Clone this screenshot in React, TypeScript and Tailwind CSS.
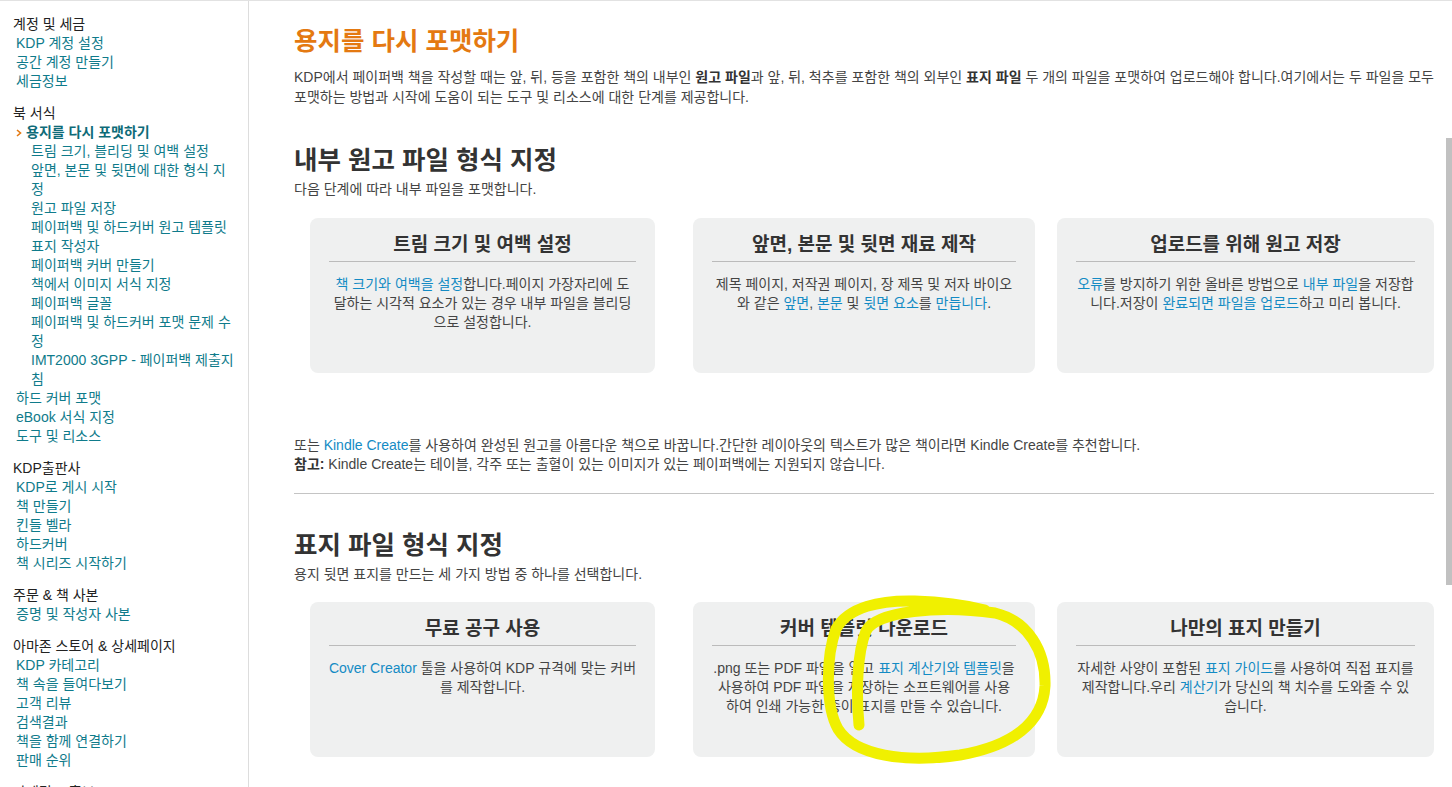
import React from "react"

type Item = { t: string; sub?: boolean; active?: boolean }
type Group = { title: string; items: Item[] }

const groups: Group[] = [
  {
    title: "계정 및 세금",
    items: [{ t: "KDP 계정 설정" }, { t: "공간 계정 만들기" }, { t: "세금정보" }],
  },
  {
    title: "북 서식",
    items: [
      { t: "용지를 다시 포맷하기", active: true },
      { t: "트림 크기, 블리딩 및 여백 설정", sub: true },
      { t: "앞면, 본문 및 뒷면에 대한 형식 지\n정", sub: true },
      { t: "원고 파일 저장", sub: true },
      { t: "페이퍼백 및 하드커버 원고 템플릿", sub: true },
      { t: "표지 작성자", sub: true },
      { t: "페이퍼백 커버 만들기", sub: true },
      { t: "책에서 이미지 서식 지정", sub: true },
      { t: "페이퍼백 글꼴", sub: true },
      { t: "페이퍼백 및 하드커버 포맷 문제 수\n정", sub: true },
      { t: "IMT2000 3GPP - 페이퍼백 제출지\n침", sub: true },
      { t: "하드 커버 포맷" },
      { t: "eBook 서식 지정" },
      { t: "도구 및 리소스" },
    ],
  },
  {
    title: "KDP출판사",
    items: [
      { t: "KDP로 게시 시작" },
      { t: "책 만들기" },
      { t: "킨들 벨라" },
      { t: "하드커버" },
      { t: "책 시리즈 시작하기" },
    ],
  },
  {
    title: "주문 & 책 사본",
    items: [{ t: "증명 및 작성자 사본" }],
  },
  {
    title: "아마존 스토어 & 상세페이지",
    items: [
      { t: "KDP 카테고리" },
      { t: "책 속을 들여다보기" },
      { t: "고객 리뷰" },
      { t: "검색결과" },
      { t: "책을 함께 연결하기" },
      { t: "판매 순위" },
    ],
  },
  {
    title: "마케팅 & 홍보",
    items: [],
  },
]

const A = ({ children }: { children: React.ReactNode }) => (
  <span className="text-[#148bc4]">{children}</span>
)

function Sidebar() {
  return (
    <aside className="w-[249px] shrink-0 border-r border-[#dddddd] pl-[13px] pr-[4px] pt-[14px] text-[14px] leading-[19px]">
      {groups.map((g) => (
        <div key={g.title} className="mb-[13px]">
          <div className="text-[#222]">{g.title}</div>
          {g.items.map((it) =>
            it.active ? (
              <div key={it.t} className="flex items-center pl-[3px] font-bold text-[#0e6b78]">
                <svg width="10" height="8" viewBox="0 0 10 8" className="shrink-0">
                  <polyline points="1,1 4.5,4 1,7" fill="none" stroke="#e47911" strokeWidth="1.6" />
                </svg>
                <span>{it.t}</span>
              </div>
            ) : (
              <div
                key={it.t}
                className={
                  it.sub
                    ? "whitespace-pre-line pl-[18px] text-[#0f7b8b]"
                    : "whitespace-pre-line pl-[3px] text-[#0f7b8b]"
                }
              >
                {it.t}
              </div>
            )
          )}
        </div>
      ))}
    </aside>
  )
}

function Card({ title, w, children }: { title: string; w: string; children: React.ReactNode }) {
  return (
    <div className={`h-[155px] shrink-0 rounded-[8px] bg-[#eff0f0] ${w}`}>
      <div className="mx-[19px] border-b border-[#bbbbbb] pt-[13px] pb-[3px] text-center text-[19px] font-bold leading-[27px] text-[#333]">
        {title}
      </div>
      <p className="mt-[13px] whitespace-nowrap px-[8px] text-center leading-[19px]">{children}</p>
    </div>
  )
}

export default function App() {
  return (
    <div className="relative flex h-[787px] overflow-hidden border-t border-[#e2e2e2] bg-white font-['Liberation_Sans','Noto_Sans_CJK_KR',sans-serif]">
      <Sidebar />

      <main className="flex-1 pl-[45px] pt-[24px] text-[14px] text-[#444]">
        <h1 className="text-[25.5px] font-bold leading-[32px] text-[#e47911]">용지를 다시 포맷하기</h1>
        <p className="mt-[10px] w-[1140px] leading-[20px]">
          <span className="block whitespace-nowrap">
            KDP에서 페이퍼백 책을 작성할 때는 앞, 뒤, 등을 포함한 책의 내부인 <b className="text-[#333]">원고 파일</b>과 앞, 뒤, 척추를 포함한 책의 외부인{" "}
            <b className="text-[#333]">표지 파일</b> 두 개의 파일을 포맷하여 업로드해야 합니다.여기에서는 두 파일을 모두
          </span>
          <span className="block whitespace-nowrap">포맷하는 방법과 시작에 도움이 되는 도구 및 리소스에 대한 단계를 제공합니다.</span>
        </p>

        <h2 className="mt-[37px] text-[25.5px] font-bold leading-[32px] text-[#333]">내부 원고 파일 형식 지정</h2>
        <p className="mt-[3px] leading-[20px]">다음 단계에 따라 내부 파일을 포맷합니다.</p>

        <div className="mt-[19px] ml-[16px] flex">
          <Card title="트림 크기 및 여백 설정" w="w-[345px]">
            <A>책 크기와 여백을 설정</A>합니다.페이지 가장자리에 도
            <br />
            달하는 시각적 요소가 있는 경우 내부 파일을 블리딩
            <br />
            으로 설정합니다.
          </Card>
          <div className="w-[38px] shrink-0" />
          <Card title="앞면, 본문 및 뒷면 재료 제작" w="w-[342px]">
            제목 페이지, 저작권 페이지, 장 제목 및 저자 바이오
            <br />와 같은 <A>앞면</A>, <A>본문</A> 및 <A>뒷면 요소</A>를 <A>만듭니다</A>.
          </Card>
          <div className="w-[22px] shrink-0" />
          <Card title="업로드를 위해 원고 저장" w="w-[377px]">
            <A>오류</A>를 방지하기 위한 올바른 방법으로 <A>내부 파일</A>을 저장합
            <br />
            니다.저장이 <A>완료되면 파일을 업로드</A>하고 미리 봅니다.
          </Card>
        </div>

        <div className="mt-[63px] leading-[19px]">
          <div>
            또는 <A>Kindle Create</A>를 사용하여 완성된 원고를 아름다운 책으로 바꿉니다.간단한 레이아웃의 텍스트가 많은 책이라면 Kindle Create를 추천합니다.
          </div>
          <div>
            <b className="text-[#333]">참고:</b> Kindle Create는 테이블, 각주 또는 출혈이 있는 이미지가 있는 페이퍼백에는 지원되지 않습니다.
          </div>
        </div>

        <hr className="mt-[19px] w-[1140px] border-[#c4c4c4]" />

        <h2 className="mt-[35px] text-[25.5px] font-bold leading-[32px] text-[#333]">표지 파일 형식 지정</h2>
        <p className="mt-[3px] leading-[20px]">용지 뒷면 표지를 만드는 세 가지 방법 중 하나를 선택합니다.</p>

        <div className="mt-[18px] ml-[16px] flex">
          <Card title="무료 공구 사용" w="w-[345px]">
            <A>Cover Creator</A> 툴을 사용하여 KDP 규격에 맞는 커버
            <br />를 제작합니다.
          </Card>
          <div className="w-[38px] shrink-0" />
          <Card title="커버 템플릿 다운로드" w="w-[342px]">
            .png 또는 PDF 파일을 열고 <A>표지 계산기와 템플릿</A>을
            <br />
            사용하여 PDF 파일을 저장하는 소프트웨어를 사용
            <br />
            하여 인쇄 가능한 종이 표지를 만들 수 있습니다.
          </Card>
          <div className="w-[22px] shrink-0" />
          <Card title="나만의 표지 만들기" w="w-[377px]">
            자세한 사양이 포함된 <A>표지 가이드</A>를 사용하여 직접 표지를
            <br />
            제작합니다.우리 <A>계산기</A>가 당신의 책 치수를 도와줄 수 있
            <br />
            습니다.
          </Card>
        </div>
      </main>

      <div className="w-[6px] shrink-0">
        <div className="mt-[137px] h-[447px] bg-[#c1c1c1]" />
      </div>

      <svg
        className="pointer-events-none absolute left-0 top-0"
        width="1452"
        height="787"
        viewBox="0 0 1452 787"
      >
        <path
          d="M 859 724 C 856 692, 857 652, 866 630 C 876 610, 940 604, 995 612 C 1028 620, 1046 650, 1045 685 C 1043 722, 1012 745, 960 754 C 905 762, 855 755, 838 728 C 825 705, 826 655, 836 628 C 848 606, 880 599, 915 600 C 945 601, 965 604, 985 609"
          fill="none"
          stroke="#f0f000"
          strokeWidth="11"
          strokeLinecap="round"
          strokeLinejoin="round"
        />
      </svg>
    </div>
  )
}
